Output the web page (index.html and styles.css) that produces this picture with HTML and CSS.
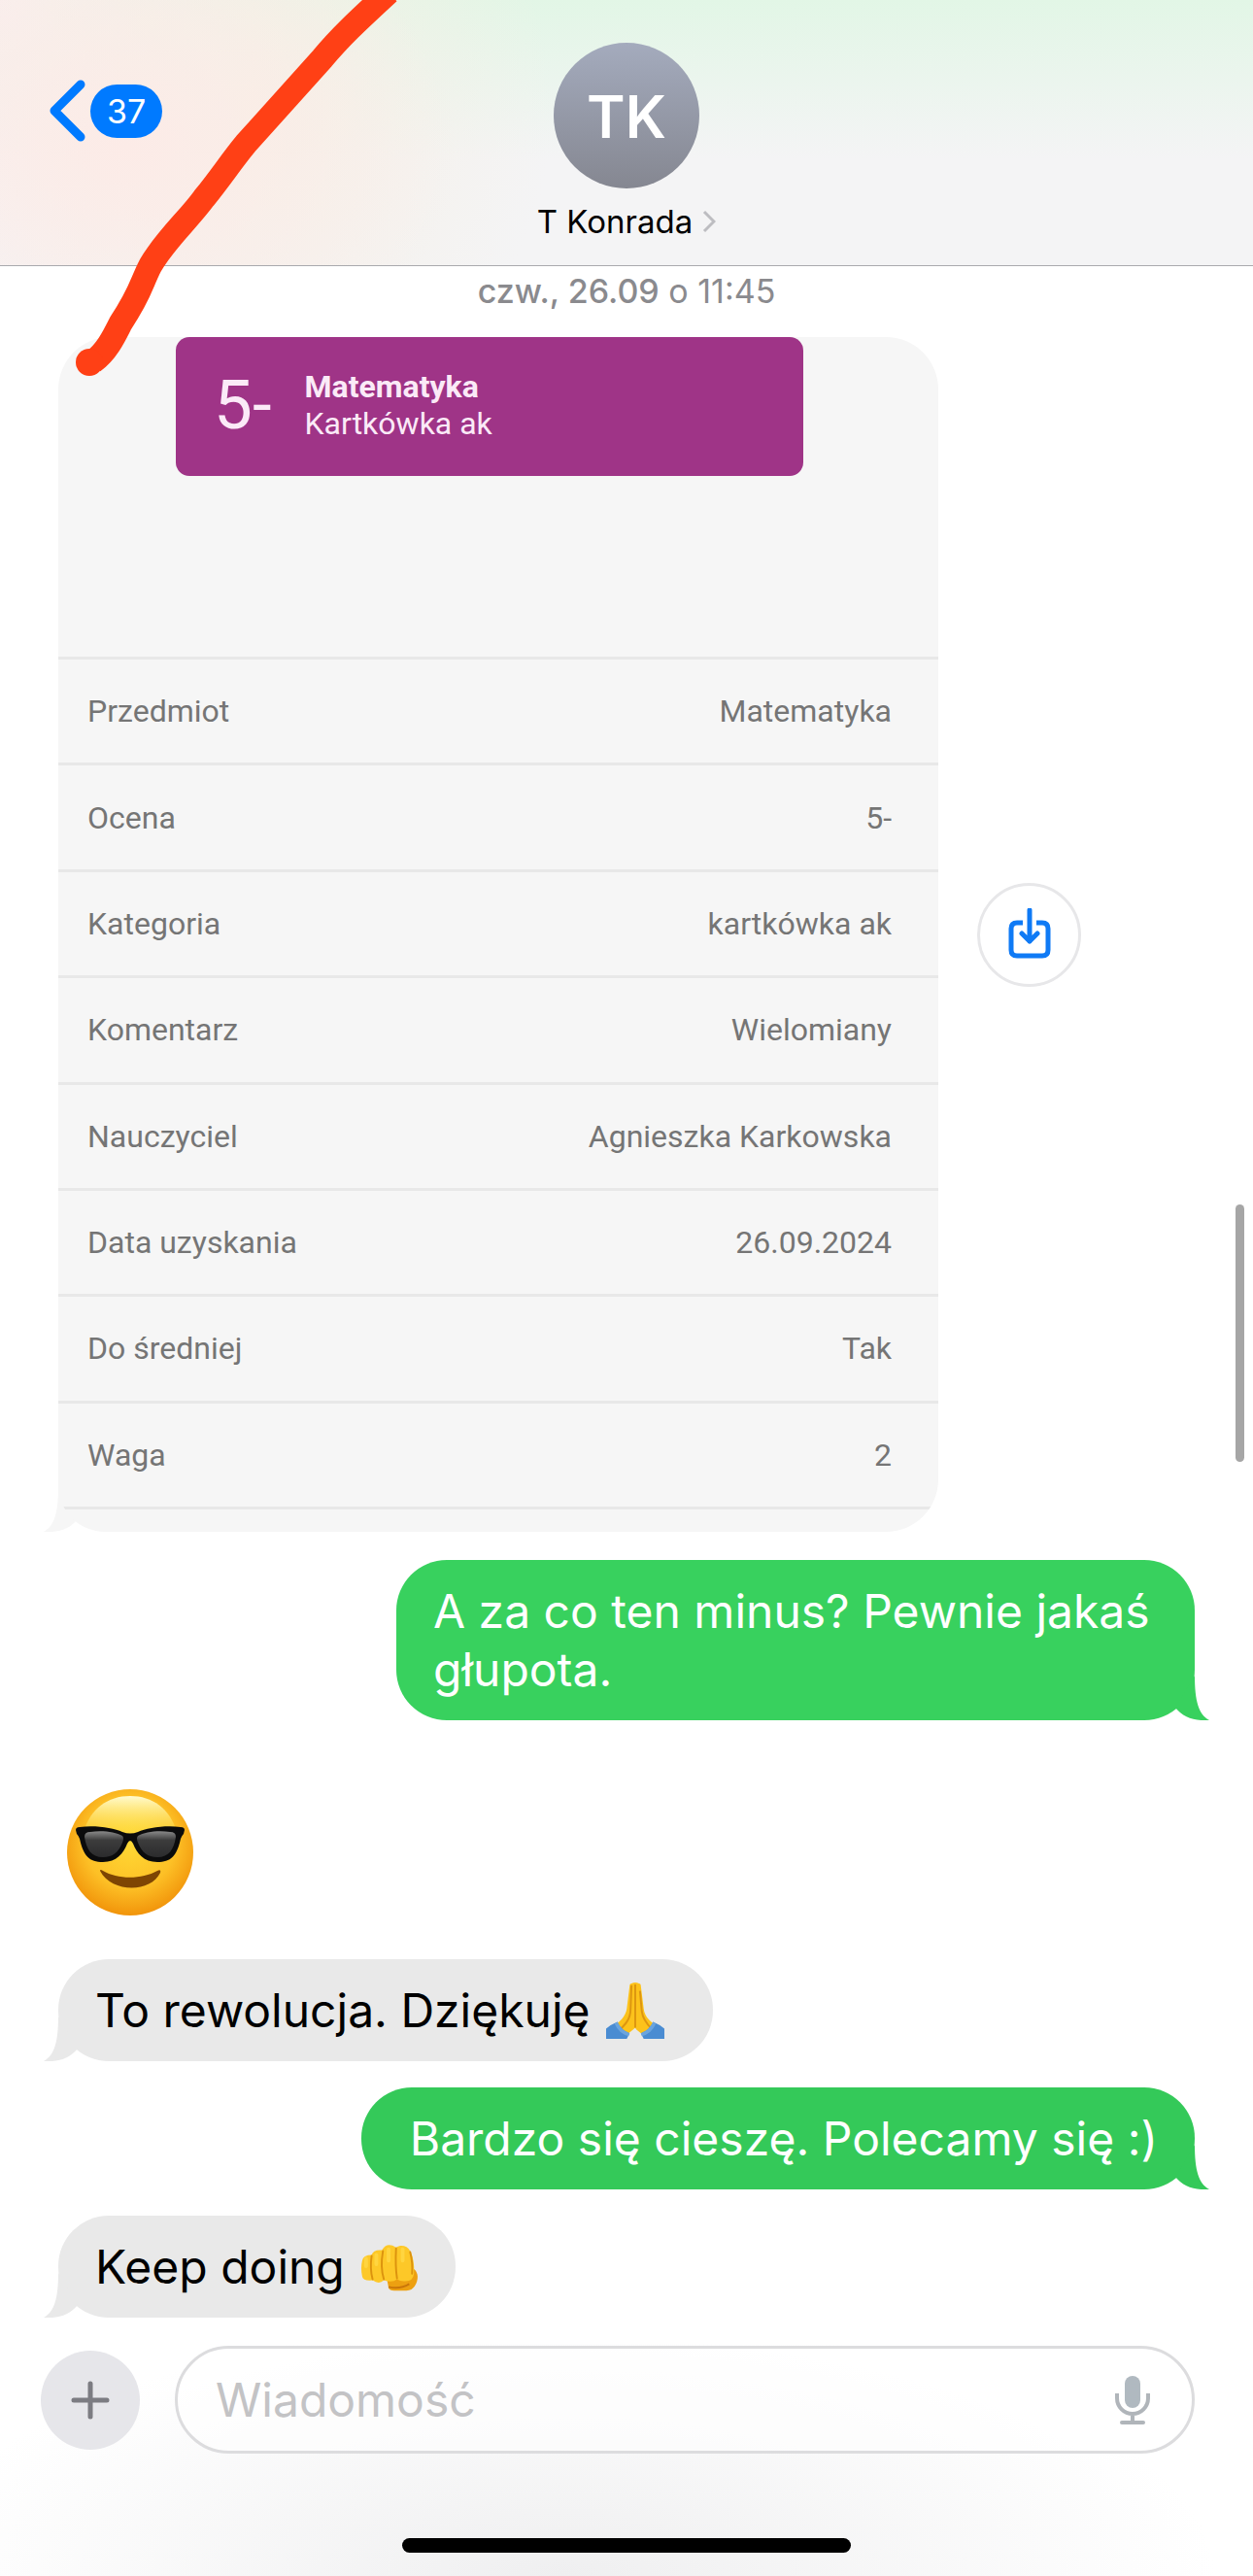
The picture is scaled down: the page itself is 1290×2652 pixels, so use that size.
FILE: index.html
```html
<!DOCTYPE html>
<html lang="pl">
<head>
  <meta charset="UTF-8">
  <meta name="viewport" content="width=device-width, initial-scale=1.0">
  <title>T Konrada</title>
  <link rel="stylesheet" href="styles.css">
</head>
<body>
  <!-- shared shapes -->
  <svg class="defs" aria-hidden="true">
    <symbol id="tail" viewBox="0 0 35 60">
      <path d="M20 14 C20 40 24 54 35 60 C20 61 8 57 0 47 Z"/>
    </symbol>
  </svg>

  <header class="topbar">
    <a class="back" href="#" aria-label="Wstecz, 37 nieprzeczytanych">
      <svg class="back-icon" viewBox="0 0 38 64" aria-hidden="true"><path d="M33 5 L6 32 L33 59"/></svg>
      <span class="count">37</span>
    </a>
    <a class="contact" href="#">
      <span class="avatar">TK</span>
      <span class="name">T Konrada
        <svg class="name-icon" viewBox="0 0 14 24" aria-hidden="true"><path d="M2 2 L12 12 L2 22"/></svg>
      </span>
    </a>
  </header>

  <main class="chat">
    <p class="date"><b>czw., 26.09</b> o 11:45</p>

    <div class="photo-row">
      <div class="photo">
        <svg class="tail" aria-hidden="true"><use href="#tail"/></svg>
        <div class="photo-inner">
          <div class="grade">
            <span class="mark">5-</span>
            <div class="grade-text">
              <strong>Matematyka</strong>
              <span>Kartkówka ak</span>
            </div>
          </div>
          <table class="details">
            <tr><th scope="row">Przedmiot</th><td>Matematyka</td></tr>
            <tr><th scope="row">Ocena</th><td>5-</td></tr>
            <tr><th scope="row">Kategoria</th><td>kartkówka ak</td></tr>
            <tr><th scope="row">Komentarz</th><td>Wielomiany</td></tr>
            <tr><th scope="row">Nauczyciel</th><td>Agnieszka Karkowska</td></tr>
            <tr><th scope="row">Data uzyskania</th><td>26.09.2024</td></tr>
            <tr><th scope="row">Do średniej</th><td>Tak</td></tr>
            <tr><th scope="row">Waga</th><td>2</td></tr>
          </table>
        </div>
      </div>
      <button class="save" type="button" aria-label="Zapisz">
        <svg viewBox="0 0 44 52" aria-hidden="true">
          <path class="tray" d="M15 15 H9 Q3 15 3 21 V43 Q3 49 9 49 H35 Q41 49 41 43 V21 Q41 15 35 15 H29"/>
          <path class="arrow" d="M22 2 V34 M14 26 L22 34 L30 26"/>
        </svg>
      </button>
    </div>

    <div class="bubble out">
      A za co ten minus? Pewnie jakaś głupota.
      <svg class="tail" aria-hidden="true"><use href="#tail"/></svg>
    </div>

    <svg class="big-emoji" viewBox="0 0 130 130" role="img" aria-label="Uśmiech w okularach">
      <defs>
        <radialGradient id="face" cx="50%" cy="42%" r="60%">
          <stop offset="0" stop-color="#ffd935"/>
          <stop offset="0.6" stop-color="#fdc026"/>
          <stop offset="1" stop-color="#f09008"/>
        </radialGradient>
        <linearGradient id="shine" x1="0" y1="0" x2="0" y2="1">
          <stop offset="0" stop-color="#fffbd0"/>
          <stop offset="1" stop-color="#ffea3c" stop-opacity="0"/>
        </linearGradient>
        <linearGradient id="lens" x1="0" y1="0" x2="0" y2="1">
          <stop offset="0" stop-color="#8a8a8a"/>
          <stop offset="0.35" stop-color="#3c3c3c"/>
          <stop offset="1" stop-color="#2b2b2d"/>
        </linearGradient>
      </defs>
      <circle cx="65" cy="65" r="65" fill="url(#face)"/>
      <path d="M17 44 C24 20 42 7 65 7 S106 20 113 44 C96 58 34 58 17 44 Z" fill="url(#shine)"/>
      <path d="M9 42 Q9 39 13 39 C30 37 48 40 57 44 Q65 47 73 44 C82 40 100 37 117 39 Q121 39 121 42 L120 46 Q118 48 117 51 C113 69 107 75 93 75 C79 75 72 66 68 56 Q65 50 62 56 C58 66 51 75 37 75 C23 75 17 69 13 51 Q12 48 10 46 Z" fill="#0b0b0c"/>
      <path d="M18 49 Q18 44 24 44 C36 42 50 44 57 48 Q59 50 57 55 C53 65 47 70 37 70 C25 70 20 62 18 49 Z" fill="url(#lens)"/>
      <path d="M112 49 Q112 44 106 44 C94 42 80 44 73 48 Q71 50 73 55 C77 65 83 70 93 70 C105 70 110 62 112 49 Z" fill="url(#lens)"/>
      <path d="M34 84 Q34 82 37 84 C52 93 77 93 93 84 Q97 82 96 86 C86 107 46 107 34 84 Z" fill="#7e4503"/>
    </svg>

    <div class="bubble in wide">
      To rewolucja. Dziękuję
      <svg class="emoji" viewBox="0 0 62 62" role="img" aria-label="Złożone dłonie">
        <path d="M27 2 Q31 0 35 2 Q37 2 37 5 L40 29 C41 38 48 44 56 48 L43 60 L32 51 L31 49 L29 51 L18 60 L6 48 C14 44 21 37 22 29 L25 5 Q25 2 27 2 Z" fill="#fcc21b"/>
        <path d="M31 3 V49 M27 4 L26 30 C26 40 20 46 14 52 M36 10 L38 32 C39 40 44 46 49 51" fill="none" stroke="#dd9610" stroke-width="2"/>
        <path d="M0 50 Q5 46 12 43 Q16 52 25 55 L22 61 H0 Z" fill="#4a8cd2"/>
        <path d="M62 50 Q57 46 50 43 Q46 52 37 55 L40 61 H62 Z" fill="#4a8cd2"/>
        <path d="M12 43 Q16 52 25 55 L24 58 Q14 56 9 45 Z" fill="#6ba4de"/>
        <path d="M50 43 Q46 52 37 55 L38 58 Q48 56 53 45 Z" fill="#6ba4de"/>
      </svg>
      <svg class="tail" aria-hidden="true"><use href="#tail"/></svg>
    </div>

    <div class="bubble out single wide">
      Bardzo się cieszę. Polecamy się :)
      <svg class="tail" aria-hidden="true"><use href="#tail"/></svg>
    </div>

    <div class="bubble in">
      Keep doing
      <svg class="emoji" viewBox="0 0 62 62" role="img" aria-label="Pięść">
        <path d="M28 42 L30 53 Q31 56 36 56 H49 Q55 56 58 51 C62 44 62 37 57 33 Z" fill="#eda011"/>
        <path d="M30 52 Q42 55 52 49" fill="none" stroke="#c9760a" stroke-width="2"/>
        <path d="M2 24 Q3 18 12 18 Q14 12 23 13 Q28 4 38 10 C43 7 50 8 53 14 Q58 24 57 38 Q56 47 46 46 Q42 46 39 44 Q34 48 25 45 Q20 50 13 45 Q3 46 2 41 Q0 32 2 24 Z" fill="#fdc828"/>
        <path d="M12 19 Q10 33 13 44 M24 14 Q21 31 25 44 M38 11 Q37 30 39 43 M53 15 Q56 27 55 38" fill="none" stroke="#dc930e" stroke-width="2" stroke-linecap="round"/>
        <path d="M6 22 V30 M17 18 V28 M30 12 V24 M45 12 V24" fill="none" stroke="#ffd540" stroke-width="4" stroke-linecap="round"/>
      </svg>
      <svg class="tail" aria-hidden="true"><use href="#tail"/></svg>
    </div>
  </main>

  <footer class="composer">
    <form class="compose-row">
      <button class="plus" type="button" aria-label="Dodaj">
        <svg viewBox="0 0 40 40" aria-hidden="true"><path d="M20 3 V37 M3 20 H37"/></svg>
      </button>
      <div class="field">
        <input type="text" aria-label="Wiadomość" placeholder="Wiadomość">
        <button class="mic" type="button" aria-label="Dyktuj">
          <svg viewBox="0 0 36 52" aria-hidden="true">
            <rect x="10" y="1" width="16" height="33" rx="8"/>
            <path class="cup" d="M2 19 V24 A16 16 0 0 0 34 24 V19 M18 40 V49"/>
            <path class="base" d="M7 49 H29"/>
          </svg>
        </button>
      </div>
    </form>
    <div class="home"></div>
  </footer>

  <div class="thumb"></div>

  <!-- red marker line -->
  <svg class="marker" viewBox="0 0 430 400" aria-hidden="true">
    <path d="M400 -8 C372 18 352 36 332 60 C300 96 276 122 253 148 C238 166 228 182 210 204 C194 226 170 247 155 273 C145 292 146 300 124 333 C118 345 110 362 96 372"/>
    <circle cx="92" cy="373" r="14"/>
  </svg>
</body>
</html>
```

FILE: styles.css
```css
* {
  box-sizing: border-box;
}
body {
  margin: 0;
  min-height: 100vh;
  display: flex;
  flex-direction: column;
  position: relative;
  background: #fff;
  color: #000;
  font-family: Inter, "Liberation Sans", sans-serif;
}
button {
  border: none;
  padding: 0;
  background: none;
  cursor: pointer;
}
a {
  color: inherit;
  text-decoration: none;
}
.defs {
  position: absolute;
  width: 0;
  height: 0;
}

/* top bar */
.topbar {
  display: grid;
  grid-template-columns: 1fr auto 1fr;
  align-items: start;
  height: 274px;
  padding: 44px 50px 0;
  border-bottom: 1px solid #a9a9ad;
  background:
    radial-gradient(ellipse 340px 260px at 130px 150px, #fcebe7 0%, rgba(252, 235, 231, 0) 100%),
    radial-gradient(ellipse 300px 320px at 270px 110px, #f6f0e6 0%, rgba(246, 240, 230, 0) 100%),
    radial-gradient(ellipse 300px 300px at 0 0, #f9efee 0%, rgba(249, 239, 238, 0) 100%),
    linear-gradient(#e2f6e6, #f4f4f5 60%);
}
.back {
  display: flex;
  align-items: center;
  gap: 5px;
  margin-top: 38px;
}
.back-icon {
  width: 38px;
  height: 64px;
  fill: none;
  stroke: #007aff;
  stroke-width: 9;
  stroke-linecap: round;
  stroke-linejoin: round;
}
.count {
  padding: 0 17px;
  border-radius: 28px;
  background: #007aff;
  color: #fff;
  font-size: 34px;
  line-height: 55px;
}
.contact {
  display: flex;
  flex-direction: column;
  align-items: center;
}
.avatar {
  width: 150px;
  height: 150px;
  border-radius: 50%;
  background: linear-gradient(#a4abbd, #858791);
  color: #fff;
  font-size: 60px;
  font-weight: 600;
  line-height: 152px;
  text-align: center;
}
.name {
  display: flex;
  align-items: center;
  gap: 10px;
  margin-top: 14px;
  font-size: 33px;
  line-height: 40px;
}
.name-icon {
  width: 14px;
  height: 24px;
  fill: none;
  stroke: #bdbdc1;
  stroke-width: 3;
}

/* conversation */
.chat {
  flex: 1;
  display: flex;
  flex-direction: column;
  align-items: flex-start;
  padding: 6px 60px 0;
}
.date {
  align-self: center;
  margin: 0 0 27px;
  color: #8a8a8e;
  font-size: 34px;
  line-height: 40px;
}
.date b {
  font-weight: 500;
}
.photo-row {
  align-self: stretch;
  display: flex;
  align-items: center;
  gap: 40px;
  margin-bottom: 29px;
}
.photo {
  position: relative;
  flex: 0 1 906px;
  fill: #f6f6f6;
  font-family: Roboto, sans-serif;
}
.photo-inner {
  position: relative;
  overflow: hidden;
  padding-bottom: 23px;
  border-radius: 54px;
  border-bottom-left-radius: 48px;
  background: #f6f6f6;
}
.grade {
  display: flex;
  align-items: center;
  gap: 34px;
  height: 143px;
  margin: 0 139px 186px 121px;
  padding: 0 0 4px 39px;
  border-radius: 14px;
  background: #9f3487;
  color: #fbeaf7;
}
.mark {
  font-size: 71px;
}
.grade-text {
  display: flex;
  flex-direction: column;
  font-size: 32px;
  line-height: 38px;
}
.details {
  width: 100%;
  height: 878px;
  border-collapse: collapse;
  border-top: 3px solid #e8e8e8;
  color: #757575;
  font-size: 32px;
  line-height: 38px;
}
.details tr {
  border-bottom: 3px solid #e8e8e8;
}
.details th {
  padding: 0 0 0 30px;
  font-weight: 400;
  text-align: left;
}
.details td {
  padding: 0 48px 0 0;
  text-align: right;
}
.save {
  width: 107px;
  height: 107px;
  border: 3px solid #e7e7e9;
  border-radius: 50%;
}
.save svg {
  width: 44px;
  height: 52px;
  fill: none;
  stroke: #0f7af5;
}
.tray {
  stroke-width: 5;
}
.arrow {
  stroke-width: 5;
  stroke-linecap: round;
  stroke-linejoin: round;
}

.bubble {
  position: relative;
  margin-bottom: 27px;
  padding: 23px 38px 22px;
  border-radius: 52px;
  font-size: 48px;
  line-height: 60px;
}
.bubble.in {
  display: flex;
  align-items: center;
  gap: 16px;
  background: #e9e9e9;
  fill: #e9e9e9;
}
.bubble.in.wide {
  padding-right: 50px;
}
.bubble.out {
  align-self: flex-end;
  max-width: 822px;
  background: #38d15e;
  fill: #38d15e;
  color: #fff;
}
.bubble.out.wide {
  padding-left: 50px;
}
.bubble.out.single {
  max-width: none;
  background: #34c959;
  fill: #34c959;
}
.emoji {
  width: 60px;
  height: 60px;
}
.tail {
  position: absolute;
  right: -15px;
  bottom: 0;
  width: 35px;
  height: 60px;
}
.in .tail,
.photo .tail {
  right: auto;
  left: -15px;
  transform: scaleX(-1);
}
.big-emoji {
  width: 130px;
  height: 130px;
  margin: 44px 0 45px 9px;
}

/* message field */
.composer {
  padding: 2px 60px 24px 42px;
  background: radial-gradient(ellipse 52% 110% at 45% 100%, #efeff0 0%, #fff 100%);
}
.compose-row {
  display: flex;
  align-items: center;
  gap: 36px;
}
.plus {
  display: flex;
  align-items: center;
  justify-content: center;
  width: 102px;
  height: 102px;
  border-radius: 50%;
  background: #e6e6ea;
}
.plus svg {
  width: 40px;
  height: 40px;
  stroke: #7c7c82;
  stroke-width: 5;
  stroke-linecap: round;
}
.field {
  flex: 1;
  display: flex;
  align-items: center;
  height: 111px;
  padding: 0 43px 0 39px;
  border: 3px solid #dcdcde;
  border-radius: 56px;
  background: rgba(255, 255, 255, 0.6);
}
.field input {
  flex: 1;
  min-width: 0;
  border: none;
  outline: none;
  padding: 0;
  background: none;
  font-family: inherit;
  font-size: 48px;
  line-height: 60px;
}
.field input::placeholder {
  color: #c3c3c5;
  opacity: 1;
}
.mic svg {
  display: block;
  width: 36px;
  height: 52px;
  fill: #b0b9c0;
}
.mic path {
  fill: none;
  stroke: #b0b5ba;
  stroke-width: 4;
}
.mic .base {
  stroke-linecap: round;
}
.home {
  width: 462px;
  height: 15px;
  margin: 87px auto 0;
  border-radius: 8px;
  background: #000;
}
.composer {
  padding-left: 0;
  padding-right: 0;
}
.compose-row {
  padding: 0 60px 0 42px;
}

.thumb {
  position: absolute;
  top: 1240px;
  right: 9px;
  width: 9px;
  height: 265px;
  border-radius: 5px;
  background: #a6a6a6;
}
.marker {
  position: absolute;
  top: 0;
  left: 0;
  width: 430px;
  height: 400px;
  fill: #ff4015;
  pointer-events: none;
}
.marker path {
  fill: none;
  stroke: #ff4015;
  stroke-width: 25;
}
```
